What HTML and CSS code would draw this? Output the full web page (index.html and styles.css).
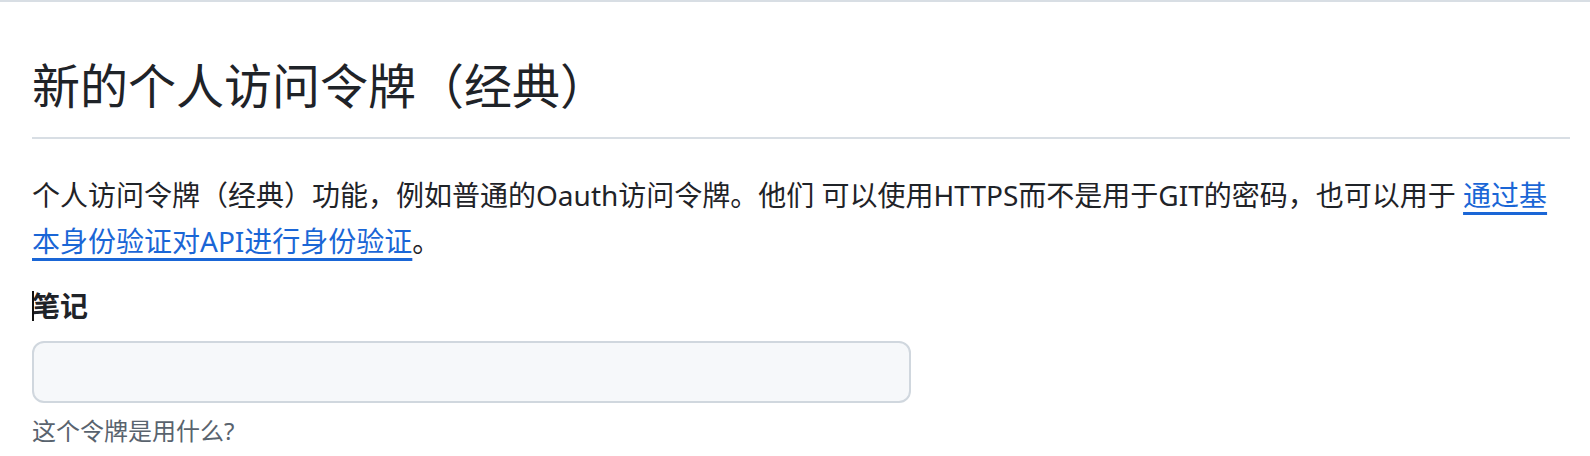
FILE: index.html
```html
<!DOCTYPE html>
<html lang="zh-CN">
<head>
<meta charset="utf-8">
<title>新的个人访问令牌（经典）</title>
<link rel="stylesheet" href="styles.css">
</head>
<body>
<div class="page">
  <div class="subhead">
    <h1 class="subhead-heading">新的个人访问令牌（经典）</h1>
  </div>
  <p class="intro">个人访问令牌（经典）功能，例如普通的Oauth访问令牌。他们 可以使用HTTPS而不是用于GIT的密码，也可以用于 <a href="#" class="link">通过基本身份验证对API进行身份验证</a>。</p>
  <div class="form-group">
    <label class="label" for="note"><span class="cursor"></span>笔记</label>
    <input class="input" id="note" type="text">
    <p class="note">这个令牌是用什么?</p>
  </div>
</div>
</body>
</html>
```

FILE: styles.css
```css
html, body {
  margin: 0;
  padding: 0;
  background: #ffffff;
}
body {
  border-top: 2px solid #d8dee4;
  font-family: "Noto Sans", "Noto Sans CJK SC", sans-serif;
  color: #1f2328;
}
.page {
  padding: 0 20px 0 32px;
}
.subhead {
  margin-top: 47px;
  padding-bottom: 19px;
  border-bottom: 2px solid #d8dee4;
}
.subhead-heading {
  margin: 0;
  font-size: 48px;
  font-weight: 400;
  line-height: 69px;
  font-family: "Noto Sans CJK SC", sans-serif;
}
.intro {
  margin: 33px 0 0;
  font-size: 28px;
  line-height: 46px;
}
.link {
  color: #1a66d6;
  text-decoration: underline;
  text-decoration-thickness: 3px;
  text-underline-offset: 6px;
}
.form-group {
  margin-top: 20px;
  display: flex;
  flex-direction: column;
  align-items: flex-start;
}
.label {
  position: relative;
  font-size: 28px;
  font-weight: 700;
  line-height: 42px;
  font-family: "Noto Sans CJK SC", sans-serif;
}
.cursor {
  position: absolute;
  left: 0;
  top: 7px;
  width: 2px;
  height: 30px;
  background: #111;
}
.input {
  margin-top: 15px;
  box-sizing: border-box;
  width: 879px;
  height: 62px;
  background: #f6f8fa;
  border: 2px solid #d0d7de;
  border-radius: 12px;
  outline: none;
  padding: 0 16px;
  font-size: 28px;
}
.note {
  margin: 10px 0 0;
  font-size: 24px;
  line-height: 36px;
  color: #59636e;
}
```
